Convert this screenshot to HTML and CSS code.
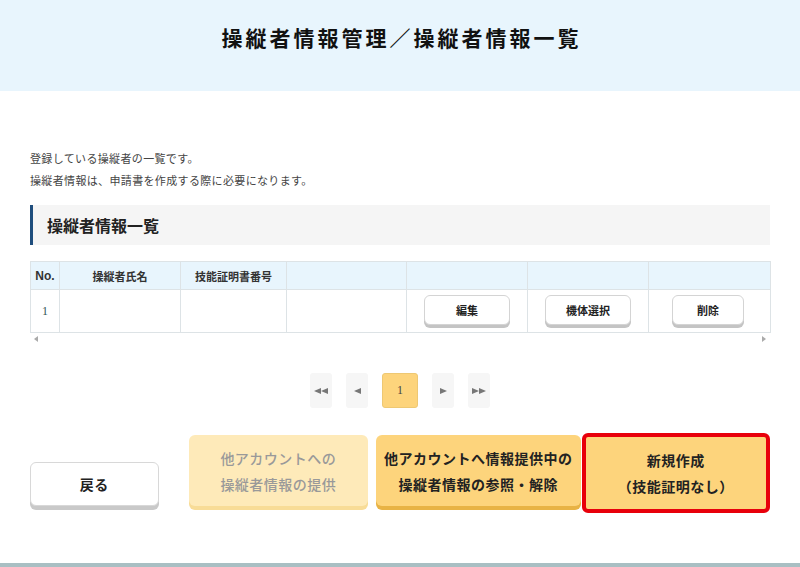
FILE: index.html
```html
<!DOCTYPE html>
<html lang="ja">
<head>
  <meta charset="UTF-8" />
  <meta name="viewport" content="width=device-width, initial-scale=1"/>
  <title>操縦者情報一覧</title>
  <link rel="stylesheet" href="styles.css">
</head>
<body>
  <header class="page-header">
    <h1>操縦者情報管理／操縦者情報一覧</h1>
  </header>

  <main class="container">
    <p class="lead">登録している操縦者の一覧です。<br>操縦者情報は、申請書を作成する際に必要になります。</p>

    <h2 class="section-title">操縦者情報一覧</h2>

    <div class="table-wrap">
      <table class="list">
        <colgroup>
          <col style="width:29px"><col style="width:121px"><col style="width:106px"><col style="width:120px">
          <col style="width:121px"><col style="width:121px"><col style="width:122px">
        </colgroup>
        <thead>
          <tr>
            <th class="no">No.</th>
            <th>操縦者氏名</th>
            <th>技能証明書番号</th>
            <th></th><th></th><th></th><th></th>
          </tr>
        </thead>
        <tbody>
          <tr>
            <td class="no">1</td>
            <td></td><td></td><td></td>
            <td><button class="btn-row">編集</button></td>
            <td><button class="btn-row">機体選択</button></td>
            <td><button class="btn-row narrow">削除</button></td>
          </tr>
        </tbody>
      </table>
      <div class="scroll-bar">
        <span class="arrow-left"></span>
        <span class="arrow-right"></span>
      </div>
    </div>

    <nav class="pager">
      <a class="pg">
        <svg width="14" height="6" viewBox="0 0 14 6"><polygon points="0,3 7,0 7,6" fill="#777"/><polygon points="7,3 14,0 14,6" fill="#777"/></svg>
      </a>
      <a class="pg">
        <svg width="7" height="6" viewBox="0 0 7 6"><polygon points="0,3 7,0 7,6" fill="#777"/></svg>
      </a>
      <a class="pg current">1</a>
      <a class="pg">
        <svg width="7" height="6" viewBox="0 0 7 6"><polygon points="7,3 0,0 0,6" fill="#777"/></svg>
      </a>
      <a class="pg">
        <svg width="14" height="6" viewBox="0 0 14 6"><polygon points="7,3 0,0 0,6" fill="#777"/><polygon points="14,3 7,0 7,6" fill="#777"/></svg>
      </a>
    </nav>

    <div class="actions">
      <button class="btn btn-back">戻る</button>
      <button class="btn btn-yellow disabled">他アカウントへの<br>操縦者情報の提供</button>
      <button class="btn btn-yellow share">他アカウントへ情報提供中の<br>操縦者情報の参照・解除</button>
      <button class="btn btn-yellow new">新規作成<br>（技能証明なし）</button>
    </div>
  </main>

  <footer class="page-footer"></footer>
</body>
</html>
```

FILE: styles.css
```css
/* リセット */
*, *::before, *::after { box-sizing: border-box; margin: 0; padding: 0; }
html, body { height: 100%; }
body {
  font-family: "Noto Sans CJK JP", "Noto Sans", sans-serif;
  color: #333;
  background: #fff;
  display: flex;
  flex-direction: column;
}

/* ヘッダー */
.page-header { height: 91px; background: #e8f5fd; padding-top: 24px; text-align: center; }
.page-header h1 { font-size: 21px; line-height: 26px; font-weight: 700; letter-spacing: 3px; text-indent: 3px; color: #111; }

.container { padding: 0 30px; flex: 1; }

.lead { margin-top: 56px; font-size: 11px; line-height: 22px; letter-spacing: 0.35px; color: #444; }

.section-title {
  margin-top: 14px;
  height: 40px;
  background: #f5f5f5;
  border-left: 3px solid #1f4e7d;
  padding-left: 14px;
  font-size: 16px;
  line-height: 40px;
  font-weight: 700;
  color: #222;
}

/* 一覧テーブル */
.table-wrap { margin-top: 16px; }
.list { width: 740px; border-collapse: collapse; table-layout: fixed; }
.list th, .list td { border: 1px solid #dde3e6; font-size: 11px; text-align: center; }
.list th { height: 28px; background: #e8f5fd; font-weight: 700; color: #333; }
.list th.no { font-family: "Liberation Sans", sans-serif; font-size: 12px; }
.list td { height: 43px; }
.list td.no { font-family: "Liberation Serif", serif; font-size: 12px; color: #335555; }

.btn-row {
  width: 86px;
  height: 30px;
  margin-bottom: 2px;
  background: #fff;
  border: 1px solid #d4d4d4;
  border-radius: 6px;
  box-shadow: 0 3px 0 #c4c4c4;
  font-family: inherit;
  font-size: 11px;
  font-weight: 700;
  color: #222;
}
.btn-row.narrow { width: 72px; margin-right: 3px; }

.scroll-bar { display: flex; justify-content: space-between; height: 12px; padding: 0 4px; align-items: center; }
.arrow-left, .arrow-right { width: 0; height: 0; border-top: 3px solid transparent; border-bottom: 3px solid transparent; }
.arrow-left { border-right: 4px solid #aaa; }
.arrow-right { border-left: 4px solid #aaa; }

/* ページャー */
.pager { margin-top: 28px; display: flex; justify-content: center; gap: 14px; }
.pg {
  width: 22px;
  height: 35px;
  background: #f6f6f6;
  border-radius: 3px;
  display: flex;
  align-items: center;
  justify-content: center;
}
.pg.current {
  width: 36px;
  background: #fdd47c;
  border: 1px solid #eec873;
  font-family: "Liberation Serif", serif;
  font-size: 12px;
  color: #444;
}

/* 下部ボタン */
.actions { margin-top: 25px; display: flex; align-items: flex-end; }
.btn {
  font-family: inherit;
  font-size: 14px;
  font-weight: 700;
  line-height: 26px;
  letter-spacing: 0.5px;
  border: none;
  border-radius: 6px;
  color: #222;
}
.btn-back {
  width: 129px;
  height: 44px;
  margin-bottom: 7px;
  background: #fff;
  border: 1px solid #d8d8d8;
  box-shadow: 0 4px 0 #c9c9c9;
}
.btn-yellow { height: 71px; margin-bottom: 7px; background: #fdd47c; box-shadow: 0 4px 0 #e8b345; }
.btn-yellow.disabled { width: 180px; margin-left: 30px; background: #feeab9; box-shadow: 0 4px 0 #f8dc97; color: #999; font-weight: 500; }
.btn-yellow.share { width: 205px; margin-left: 8px; }
.btn-yellow.new {
  width: 189px;
  height: 80px;
  margin-bottom: 0;
  margin-left: 1px;
  border: 4px solid #e8000b;
  box-shadow: none;
}

.page-footer { height: 4px; background: #a9bfc3; flex: none; }
```
